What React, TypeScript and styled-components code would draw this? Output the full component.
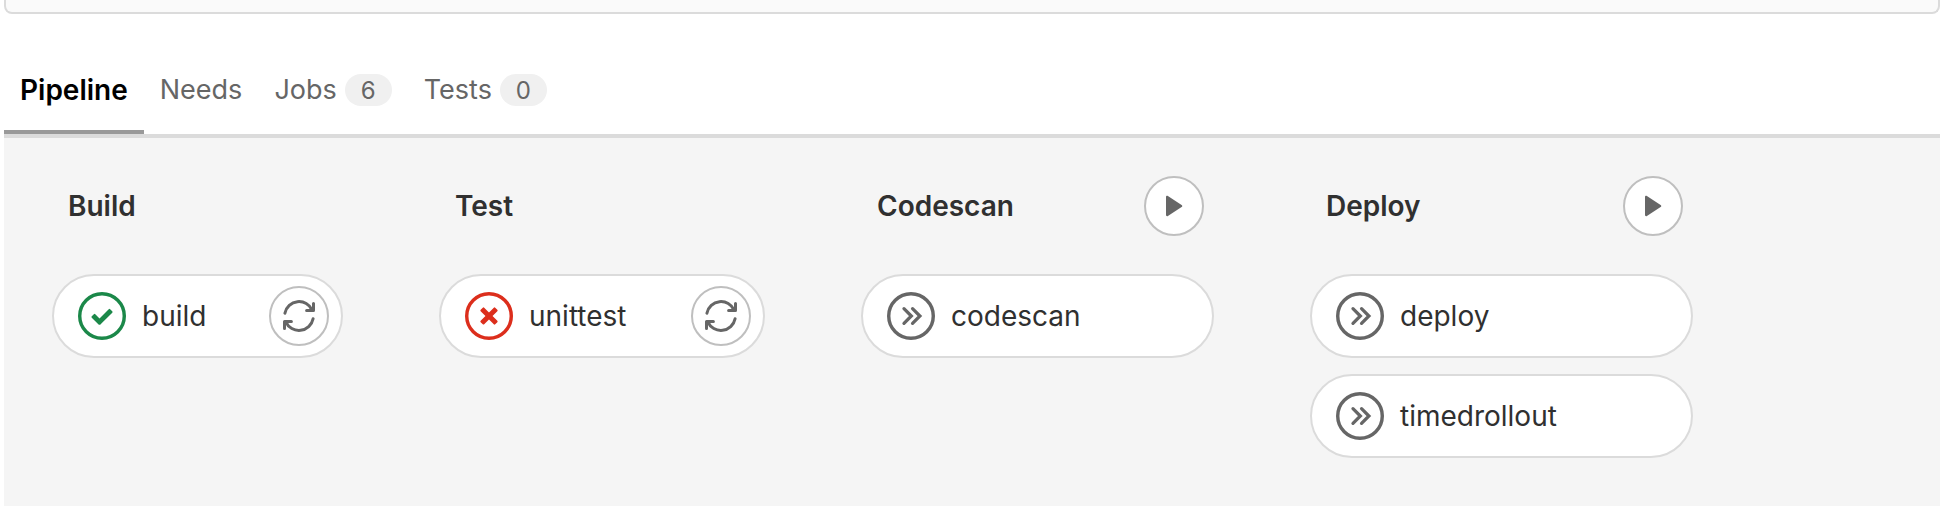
import React from "react";
import styled, { createGlobalStyle } from "styled-components";

type Status = "success" | "failed" | "skipped";

interface Job {
  name: string;
  status: Status;
  retry?: boolean;
}

interface Stage {
  title: string;
  width: number;
  playable?: boolean;
  jobs: Job[];
}

const stages: Stage[] = [
  { title: "Build", width: 291, jobs: [{ name: "build", status: "success", retry: true }] },
  { title: "Test", width: 326, jobs: [{ name: "unittest", status: "failed", retry: true }] },
  { title: "Codescan", width: 353, playable: true, jobs: [{ name: "codescan", status: "skipped" }] },
  {
    title: "Deploy",
    width: 383,
    playable: true,
    jobs: [
      { name: "deploy", status: "skipped" },
      { name: "timedrollout", status: "skipped" },
    ],
  },
];

const tabs: { label: string; count?: number }[] = [
  { label: "Pipeline" },
  { label: "Needs" },
  { label: "Jobs", count: 6 },
  { label: "Tests", count: 0 },
];

const statusColors: Record<Status, string> = {
  success: "#1b8849",
  failed: "#dc2e1c",
  skipped: "#666666",
};

const GlobalStyle = createGlobalStyle`
  *, *::before, *::after {
    box-sizing: border-box;
  }
  body {
    margin: 0;
    background: #ffffff;
    color: #303030;
    font-family: Inter, "Liberation Sans", sans-serif;
    font-size: 28px;
    line-height: 32px;
  }
`;

const Page = styled.div`
  display: flex;
  flex-direction: column;
  min-height: 100vh;
  padding-left: 4px;
`;

const InfoCard = styled.div`
  height: 14px;
  border: 2px solid #dbdbdb;
  border-top: 0;
  border-radius: 0 0 8px 8px;
  background: #fafafa;
`;

const TabBar = styled.nav`
  display: flex;
  margin-top: 44px;
  border-bottom: 4px solid #dbdbdb;
`;

const Tab = styled.a<{ $active: boolean }>`
  display: flex;
  align-items: center;
  gap: 8px;
  padding: 16px 16px 24px;
  border-bottom: 4px solid ${(p) => (p.$active ? "#999999" : "transparent")};
  color: ${(p) => (p.$active ? "#000000" : "#666666")};
  font-size: ${(p) => (p.$active ? 28 : 27)}px;
  font-weight: ${(p) => (p.$active ? 600 : 400)};
  text-decoration: none;
`;

const Badge = styled.span`
  min-width: 47px;
  padding: 2px 12px 0;
  border-radius: 16px;
  background: #f0f0f0;
  font-size: 24px;
  line-height: 30px;
  text-align: center;
`;

const Graph = styled.main`
  display: flex;
  flex: 1;
  align-items: flex-start;
  gap: 96px;
  padding: 38px 48px 48px;
  background: #f5f5f5;
`;

const StageColumn = styled.section<{ $width: number }>`
  flex: 0 0 ${(p) => p.$width}px;
`;

const StageHeader = styled.header`
  display: flex;
  align-items: center;
  justify-content: space-between;
  height: 60px;
  margin-bottom: 38px;
  padding: 0 10px 0 16px;
`;

const StageTitle = styled.h2`
  margin: 0;
  font-size: 28px;
  font-weight: 600;
`;

const JobList = styled.ul`
  display: flex;
  flex-direction: column;
  gap: 16px;
  margin: 0;
  padding: 0;
  list-style: none;
`;

const JobPill = styled.li`
  display: flex;
  align-items: center;
  justify-content: space-between;
  height: 84px;
  padding: 0 12px 0 24px;
  border: 2px solid #dbdbdb;
  border-radius: 42px;
  background: #ffffff;
`;

const JobLink = styled.a`
  display: flex;
  align-items: center;
  gap: 16px;
  color: #303030;
  text-decoration: none;
`;

const ActionButton = styled.button`
  display: flex;
  align-items: center;
  justify-content: center;
  width: 60px;
  height: 60px;
  padding: 0;
  border: 2px solid #bfbfbf;
  border-radius: 50%;
  background: #ffffff;
  color: #666666;
  cursor: pointer;
`;

const StatusSvg = styled.svg`
  flex: none;
  width: 48px;
  height: 48px;
`;

const ActionSvg = styled.svg`
  flex: none;
  width: 32px;
  height: 32px;
`;

function StatusIcon({ status }: { status: Status }) {
  const color = statusColors[status];
  return (
    <StatusSvg viewBox="0 0 14 14" role="img" aria-label={status}>
      <circle cx="7" cy="7" r="6.5" fill="none" stroke={color} />
      {status === "success" && (
        <path
          fill={color}
          d="M6.278 7.697L5.045 6.464a.296.296 0 0 0-.42-.002l-.613.614a.298.298 0 0 0 .002.42l1.91 1.909a.5.5 0 0 0 .703.005l.265-.265L9.997 6.04a.291.291 0 0 0-.009-.408l-.614-.614a.29.29 0 0 0-.408-.009L6.278 7.697z"
        />
      )}
      {status === "failed" && (
        <path
          fill={color}
          d="M7 5.969L5.599 4.568a.29.29 0 0 0-.413.004l-.614.614a.294.294 0 0 0-.004.413L5.968 7l-1.4 1.401a.29.29 0 0 0 .004.413l.614.614c.113.114.3.117.413.004L7 8.032l1.401 1.4a.29.29 0 0 0 .413-.004l.614-.614a.294.294 0 0 0 .004-.413L8.032 7l1.4-1.401a.29.29 0 0 0-.004-.413l-.614-.614a.294.294 0 0 0-.413-.004L7 5.968z"
        />
      )}
      {status === "skipped" && (
        <path
          fill="none"
          stroke={color}
          strokeWidth="0.95"
          strokeLinecap="round"
          d="M4.95 4.85L7.1 7 4.95 9.15M7.45 4.85L9.6 7 7.45 9.15"
        />
      )}
    </StatusSvg>
  );
}

function RetryIcon() {
  return (
    <ActionSvg viewBox="0 0 16 16" aria-hidden="true">
      <g fill="none" stroke="currentColor" strokeWidth="1.5" strokeLinecap="round" strokeLinejoin="round">
        <path d="M.95 6.6A7.2 7.2 0 0 1 14.6 5.1M15.25 1.8V5.25H11.8" />
        <path d="M15.05 9.4A7.2 7.2 0 0 1 1.4 10.9M.75 14.2V10.75H4.2" />
      </g>
    </ActionSvg>
  );
}

function PlayIcon() {
  return (
    <ActionSvg viewBox="0 0 16 16" aria-hidden="true">
      <path
        fill="currentColor"
        d="M4 3.5v9c0 .5.5.75.95.45l6.85-4.4c.45-.3.45-.8 0-1.1L4.95 3.05C4.5 2.75 4 3 4 3.5z"
      />
    </ActionSvg>
  );
}

export default function App() {
  return (
    <>
      <GlobalStyle />
      <Page>
        <InfoCard />
        <TabBar aria-label="Pipeline views">
          {tabs.map((tab, i) => (
            <Tab key={tab.label} href="#" $active={i === 0} aria-current={i === 0 ? "page" : undefined}>
              {tab.label}
              {tab.count !== undefined && <Badge>{tab.count}</Badge>}
            </Tab>
          ))}
        </TabBar>
        <Graph>
          {stages.map((stage) => (
            <StageColumn key={stage.title} $width={stage.width}>
              <StageHeader>
                <StageTitle>{stage.title}</StageTitle>
                {stage.playable && (
                  <ActionButton type="button" aria-label={`Play all ${stage.title} jobs`}>
                    <PlayIcon />
                  </ActionButton>
                )}
              </StageHeader>
              <JobList>
                {stage.jobs.map((job) => (
                  <JobPill key={job.name}>
                    <JobLink href="#">
                      <StatusIcon status={job.status} />
                      {job.name}
                    </JobLink>
                    {job.retry && (
                      <ActionButton type="button" aria-label={`Retry ${job.name}`}>
                        <RetryIcon />
                      </ActionButton>
                    )}
                  </JobPill>
                ))}
              </JobList>
            </StageColumn>
          ))}
        </Graph>
      </Page>
    </>
  );
}
